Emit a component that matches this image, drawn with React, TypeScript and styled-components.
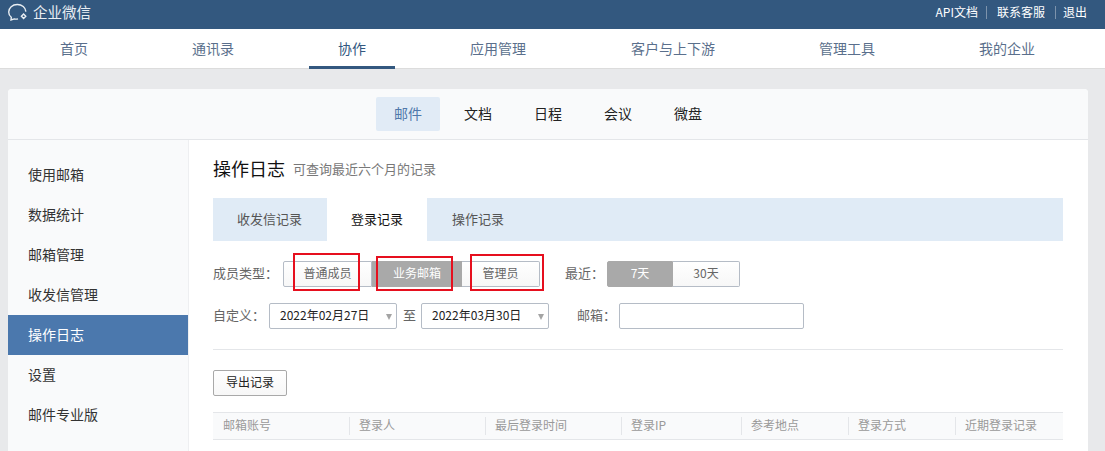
import React from "react";
import styled, { createGlobalStyle } from "styled-components";

const Global = createGlobalStyle`
  html, body { margin: 0; padding: 0; height: 451px; overflow: hidden; background: #e8e9eb; }
  body { font-family: "Noto Sans CJK SC", "Liberation Sans", sans-serif; }
  * { box-sizing: border-box; }
`;

const Top = styled.div`
  height: 29px; background: #33587f; display: flex; align-items: center; justify-content: space-between;
  padding: 0 18px 5px 8px; color: #fff;
`;
const Brand = styled.div`display: flex; align-items: center; gap: 5px; font-size: 14.5px; line-height: 20px; color: #e9eef3;`;
const TopLinks = styled.div`display: flex; align-items: center; font-size: 12px; line-height: 18px; color: #fff;`;
const TopLink = styled.span`
  &:not(:last-child)::after { content: ""; display: inline-block; width: 1px; height: 13px; background: #7d93ac; margin: 0 10px 0 8px; vertical-align: -2px; }
  &:nth-child(2)::after { margin: 0 7px 0 10px; }
`;

const Nav = styled.nav`
  height: 40px; background: #fff; display: flex; gap: 46px; padding-left: 31px; border-bottom: 1px solid #dcdcdc;
`;
const NavItem = styled.div<{ $active?: boolean }>`
  padding: 0 29px; line-height: 38px; height: 40px; font-size: 14px; white-space: nowrap;
  color: ${(p) => (p.$active ? "#33587f" : "#5a6f8c")};
  border-bottom: 3px solid ${(p) => (p.$active ? "#33587f" : "transparent")};
  &:nth-child(5) { margin-left: 1px; }
`;

const Card = styled.div`
  position: relative; margin: 20px 17px 0 8px; background: #fff; border-radius: 4px 4px 0 0; height: 362px; overflow: hidden;
`;
const SubBar = styled.div`
  height: 51px; background: #f9fafb; border-bottom: 1px solid #e4e6e9; display: flex; gap: 6px; padding: 8px 0 0 368px;
`;
const SubItem = styled.div<{ $active?: boolean }>`
  width: 64px; height: 34px; line-height: 32px; text-align: center; font-size: 14px; border-radius: 2px;
  color: ${(p) => (p.$active ? "#4f78ab" : "#222")};
  background: ${(p) => (p.$active ? "#e1ebf6" : "transparent")};
`;
const Body = styled.div`display: flex; height: 311px;`;
const Side = styled.div`
  width: 181px; flex: none; background: #f9fafb; padding-top: 15px;
  border-right: 1px solid #eeeff1;
`;
const SideItem = styled.div<{ $active?: boolean }>`
  height: 40px; line-height: 38px; padding-left: 20px; font-size: 14px;
  color: ${(p) => (p.$active ? "#fff" : "#333")};
  background: ${(p) => (p.$active ? "#4b78ad" : "transparent")};
`;
const Main = styled.div`flex: 1; padding: 15px 25px 0 24px; min-width: 0;`;
const TitleRow = styled.div`display: flex; align-items: center; gap: 8px; height: 27px; line-height: 25px; margin-bottom: 16px;`;
const Title = styled.div`font-size: 18px; color: #111;`;
const TitleNote = styled.div`font-size: 13px; color: #787878;`;
const Tabs = styled.div`display: flex; height: 43px; background: #e0ebf6;`;
const Tab = styled.div<{ $active?: boolean }>`
  padding: 0 24px; line-height: 41px; font-size: 13px; width: ${(p) => (p.$active ? "100px" : "auto")};
  margin-left: ${(p) => (p.$active ? "1px" : "0")};
  color: ${(p) => (p.$active ? "#111" : "#555")};
  background: ${(p) => (p.$active ? "#fff" : "transparent")};
  &:last-child { padding-left: 25px; }
`;
const Row = styled.div<{ $top: number }>`
  display: flex; align-items: center; height: 26px; margin-top: ${(p) => p.$top}px;
`;
const Label = styled.span<{ $gap?: number; $left?: number }>`
  font-size: 13px; line-height: 18px; padding-bottom: 2px; color: #666; margin-right: ${(p) => p.$gap ?? 0}px; margin-left: ${(p) => p.$left ?? 0}px; white-space: nowrap;
`;
const Seg = styled.div`display: flex; height: 26px;`;
const SegBtn = styled.div<{ $w: number; $on?: boolean; $pos?: string }>`
  width: ${(p) => p.$w}px; line-height: 22px; text-align: center; font-size: 12px;
  border: 1px solid ${(p) => (p.$on ? "#a9a9a9" : "#b5bcc6")};
  border-left-width: ${(p) => (p.$pos === "end" ? "0" : "1px")};
  color: ${(p) => (p.$on ? "#fff" : "#666")};
  background: ${(p) => (p.$on ? "#a9a9a9" : "linear-gradient(#fff, #f7f7f7)")};
  border-radius: ${(p) => (p.$pos === "start" ? "2px 0 0 2px" : p.$pos === "end" ? "0 2px 2px 0" : "0")};
`;
const Select = styled.div`
  position: relative; width: 128px; height: 26px; border: 1px solid #b5bcc6; border-radius: 2px;
  font-size: 12px; line-height: 22px; padding-left: 10px; color: #222; background: #fff; white-space: nowrap;
  &::after {
    content: ""; position: absolute; right: 4px; top: 10px; border-left: 3.5px solid transparent; border-right: 3.5px solid transparent;
    border-top: 6px solid #a4a4a4;
  }
`;
const Input = styled.div`width: 185px; height: 26px; border: 1px solid #b5bcc6; border-radius: 2px; background: #fff;`;
const Divider = styled.div`height: 1px; background: #e4e6e9; margin-top: 20px;`;
const ExportBtn = styled.div`
  width: 74px; height: 26px; margin-top: 20px; border: 1px solid #a9a9a9; border-radius: 2px; text-align: center;
  font-size: 12px; line-height: 22px; color: #222; background: linear-gradient(#fff, #f7f7f7);
`;
const TableHead = styled.div`
  display: flex; height: 28px; margin-top: 16px; background: #f9fafb; border-top: 1px solid #e4e6e9; border-bottom: 1px solid #e4e6e9; align-items: center;
`;
const Col = styled.div<{ $w: number; $first?: boolean }>`
  flex: none; width: ${(p) => p.$w}px; height: 18px; line-height: 16px; font-size: 12px; color: #999;
  padding-left: ${(p) => (p.$first ? "10px" : "9px")};
  border-left: ${(p) => (p.$first ? "0" : "1px solid #e4e6e9")};
`;
const Mark = styled.div<{ $x: number; $y: number; $w: number; $h: number }>`
  position: absolute; left: ${(p) => p.$x}px; top: ${(p) => p.$y}px; width: ${(p) => p.$w}px; height: ${(p) => p.$h}px;
  border: 2px solid #e60f1e; pointer-events: none;
`;

const Logo = () => (
  <svg width="20" height="18" viewBox="0 0 20 18" fill="none" stroke="#e9eef3" strokeWidth="1.4">
    <path d="M10 15.9 C8.8 16.2 7.4 16.2 6.3 15.9 L3 17 L3.3 14.3 C1.5 13 .7 11.2 .7 9 C.7 4.8 4.4 1.5 9.3 1.5 C14 1.5 17.6 4.6 17.9 8.6" />
    <path d="M15.6 10.9 L13.4 13.2 L15.6 15.5 L17.8 13.2 Z" />
  </svg>
);

const navs = ["首页", "通讯录", "协作", "应用管理", "客户与上下游", "管理工具", "我的企业"];
const subs = ["邮件", "文档", "日程", "会议", "微盘"];
const sides = ["使用邮箱", "数据统计", "邮箱管理", "收发信管理", "操作日志", "设置", "邮件专业版"];
const cols: [string, number][] = [
  ["邮箱账号", 136], ["登录人", 136], ["最后登录时间", 136], ["登录IP", 120],
  ["参考地点", 107], ["登录方式", 107], ["近期登录记录", 108],
];

export default function App() {
  return (
    <>
      <Global />
      <Top>
        <Brand><Logo />企业微信</Brand>
        <TopLinks>
          <TopLink>API文档</TopLink>
          <TopLink>联系客服</TopLink>
          <TopLink>退出</TopLink>
        </TopLinks>
      </Top>
      <Nav>
        {navs.map((n) => <NavItem key={n} $active={n === "协作"}>{n}</NavItem>)}
      </Nav>
      <Card>
        <SubBar>
          {subs.map((s) => <SubItem key={s} $active={s === "邮件"}>{s}</SubItem>)}
        </SubBar>
        <Body>
          <Side>
            {sides.map((s) => <SideItem key={s} $active={s === "操作日志"}>{s}</SideItem>)}
          </Side>
          <Main>
            <TitleRow>
              <Title>操作日志</Title>
              <TitleNote>可查询最近六个月的记录</TitleNote>
            </TitleRow>
            <Tabs>
              <Tab>收发信记录</Tab>
              <Tab $active>登录记录</Tab>
              <Tab>操作记录</Tab>
            </Tabs>
            <Row $top={20}>
              <Label $gap={5}>成员类型：</Label>
              <Seg>
                <SegBtn $w={89} $pos="start">普通成员</SegBtn>
                <SegBtn $w={90} $on>业务邮箱</SegBtn>
                <SegBtn $w={78} $pos="end">管理员</SegBtn>
              </Seg>
              <Label $left={25} $gap={3}>最近：</Label>
              <Seg>
                <SegBtn $w={66} $on $pos="start">7天</SegBtn>
                <SegBtn $w={67} $pos="end">30天</SegBtn>
              </Seg>
            </Row>
            <Row $top={16}>
              <Label $gap={4}>自定义：</Label>
              <Select>2022年02月27日</Select>
              <Label $left={6} $gap={5}>至</Label>
              <Select>2022年03月30日</Select>
              <Label $left={28} $gap={3}>邮箱：</Label>
              <Input />
            </Row>
            <Divider />
            <ExportBtn>导出记录</ExportBtn>
            <TableHead>
              {cols.map(([c, w], i) => <Col key={c} $w={w} $first={i === 0}>{c}</Col>)}
            </TableHead>
          </Main>
        </Body>
        <Mark $x={285} $y={164} $w={67} $h={38} />
        <Mark $x={368} $y={167} $w={77} $h={35} />
        <Mark $x={462} $y={165} $w={74} $h={37} />
      </Card>
    </>
  );
}
